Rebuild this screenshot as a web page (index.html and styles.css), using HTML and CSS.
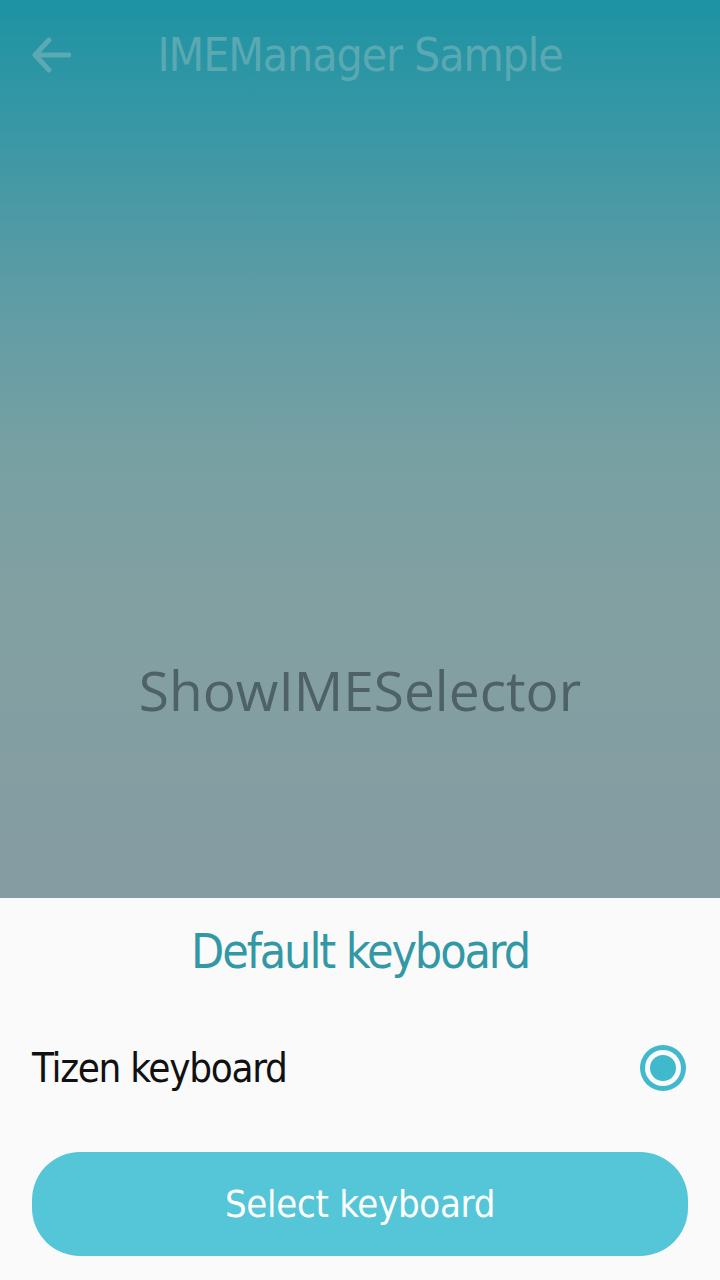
FILE: index.html
```html
<!DOCTYPE html>
<html>
<head>
<meta charset="utf-8">
<link rel="stylesheet" href="styles.css">
</head>
<body>
<div class="screen">
  <div class="scene">
    <header class="appbar">
      <svg class="back" width="42" height="40" viewBox="0 0 42 40">
        <path d="M20 5 L6 20 L20 35 M6 20 L40 20" fill="none" stroke="#5aa9b3" stroke-width="5" stroke-linecap="round" stroke-linejoin="round"/>
      </svg>
      <div class="title">IMEManager Sample</div>
    </header>
    <main class="content">
      <div class="label">ShowIMESelector</div>
    </main>
  </div>
  <section class="sheet">
    <div class="sheet-title">Default keyboard</div>
    <div class="option">
      <span class="option-text">Tizen keyboard</span>
      <span class="radio"><span class="dot"></span></span>
    </div>
    <div class="btn">Select keyboard</div>
  </section>
</div>
</body>
</html>
```

FILE: styles.css
```css
html, body {
  margin: 0;
  padding: 0;
}
body {
  width: 720px;
  height: 1280px;
  overflow: hidden;
  font-family: "DejaVu Sans Condensed", "DejaVu Sans", sans-serif;
}
.screen {
  display: flex;
  flex-direction: column;
  height: 1280px;
}
.scene {
  height: 898px;
  display: flex;
  flex-direction: column;
  background: linear-gradient(180deg, #1d93a3 0px, #3797a5 120px, #5f9ca5 300px, #77a0a3 450px, #82a0a2 600px, #859ca2 898px);
}
.appbar {
  height: 110px;
  display: flex;
  align-items: center;
  justify-content: center;
  position: relative;
}
.back {
  position: absolute;
  left: 29px;
  top: 35px;
}
.title {
  color: #5aa8b2;
  font-size: 46px;
  font-weight: 300;
  letter-spacing: -1.1px;
}
.content {
  flex: 1;
  display: flex;
  justify-content: center;
  padding-top: 545px;
}
.label {
  color: #4e6164;
  font-family: "Open Sans", sans-serif;
  font-size: 55px;
  line-height: 70px;
  height: 70px;
}
.sheet {
  flex: 1;
  background: #fafafa;
  display: flex;
  flex-direction: column;
  padding: 0 32px;
}
.sheet-title {
  text-align: center;
  color: #3398a6;
  font-size: 48px;
  font-weight: 300;
  letter-spacing: -2.1px;
  height: 110px;
  line-height: 106px;
}
.option {
  display: flex;
  align-items: center;
  justify-content: space-between;
  height: 120px;
}
.option-text {
  color: #111;
  font-size: 40px;
  font-weight: 300;
  letter-spacing: -1.3px;
}
.radio {
  width: 46px;
  height: 46px;
  border-radius: 50%;
  background: #3fb9cb;
  display: flex;
  align-items: center;
  justify-content: center;
  margin-right: 2px;
}
.dot {
  width: 26px;
  height: 26px;
  border-radius: 50%;
  background: #3fb9cb;
  box-shadow: 0 0 0 5px #fafafa;
}
.btn {
  margin-top: 24px;
  height: 104px;
  border-radius: 48px;
  background: #54c6d8;
  color: #fff;
  font-size: 38px;
  font-weight: 300;
  letter-spacing: -0.3px;
  display: flex;
  align-items: center;
  justify-content: center;
}
```
